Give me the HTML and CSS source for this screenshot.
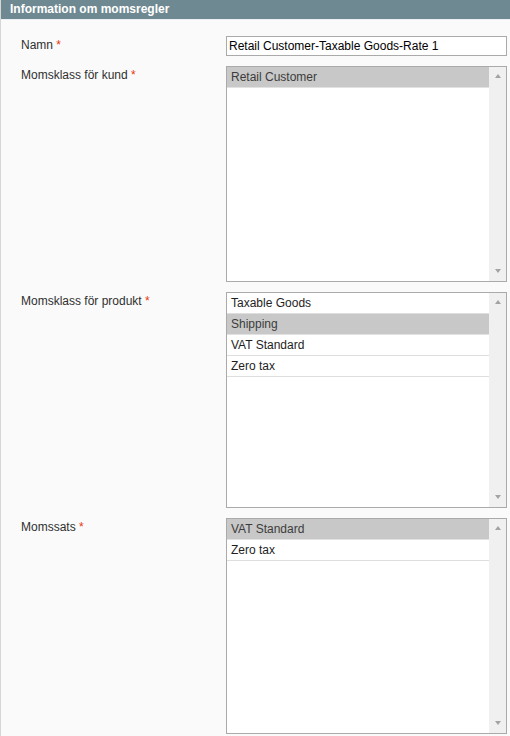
FILE: index.html
```html
<!DOCTYPE html>
<html lang="sv">
<head>
<meta charset="utf-8">
<title>Information om momsregler</title>
<link rel="stylesheet" href="styles.css">
</head>
<body>
<div class="panel">
  <div class="header">Information om momsregler</div>
  <div class="form">
    <div class="row">
      <div class="label">Namn <span class="req">*</span></div>
      <div class="field"><input class="text" type="text" value="Retail Customer-Taxable Goods-Rate 1"></div>
    </div>
    <div class="row">
      <div class="label">Momsklass för kund <span class="req">*</span></div>
      <div class="field">
        <div class="listbox">
          <div class="options">
            <div class="opt sel">Retail Customer</div>
          </div>
          <div class="scroll"><span class="up"></span><span class="down"></span></div>
        </div>
      </div>
    </div>
    <div class="row">
      <div class="label">Momsklass för produkt <span class="req">*</span></div>
      <div class="field">
        <div class="listbox">
          <div class="options">
            <div class="opt">Taxable Goods</div>
            <div class="opt sel">Shipping</div>
            <div class="opt">VAT Standard</div>
            <div class="opt">Zero tax</div>
          </div>
          <div class="scroll"><span class="up"></span><span class="down"></span></div>
        </div>
      </div>
    </div>
    <div class="row">
      <div class="label">Momssats <span class="req">*</span></div>
      <div class="field">
        <div class="listbox">
          <div class="options">
            <div class="opt sel">VAT Standard</div>
            <div class="opt">Zero tax</div>
          </div>
          <div class="scroll"><span class="up"></span><span class="down"></span></div>
        </div>
      </div>
    </div>
  </div>
</div>
</body>
</html>
```
FILE: styles.css
```css
html, body {
  margin: 0;
  padding: 0;
  background: #fafafa;
}
body {
  font-family: "Liberation Sans", Arial, sans-serif;
  font-size: 12px;
  color: #2f2f2f;
}
.panel {
  width: 510px;
  height: 736px;
  overflow: hidden;
  border-left: 1px solid #d6d6d6;
  box-sizing: border-box;
}
.header {
  height: 19px;
  line-height: 19px;
  background: #6f8992;
  color: #fff;
  font-weight: bold;
  padding-left: 9px;
  border-bottom: 1px solid #e9eef0;
}
.form {
  padding: 16px 0 0 20px;
  display: flex;
  flex-direction: column;
  gap: 10px;
}
.row {
  display: grid;
  grid-template-columns: 205px 281px;
}
.label {
  padding-top: 2px;
  line-height: 15px;
  color: #2f2f2f;
}
.req {
  color: #eb340a;
}
.text {
  display: block;
  box-sizing: border-box;
  width: 281px;
  height: 20px;
  margin: 0;
  border: 1px solid #aaaaaa;
  background: #fff;
  padding: 0 2px;
  font-family: "Liberation Sans", Arial, sans-serif;
  font-size: 12px;
  color: #000;
  outline: none;
}
.listbox {
  box-sizing: border-box;
  width: 281px;
  height: 216px;
  border: 1px solid #aaaaaa;
  background: #fff;
  display: flex;
}
.options {
  flex: 1;
  display: flex;
  flex-direction: column;
}
.opt {
  height: 20px;
  line-height: 20px;
  padding: 0 4px;
  border-bottom: 1px solid #dedede;
  color: #1e1e1e;
  white-space: nowrap;
}
.opt.sel {
  background: #c8c8c8;
  color: #3c3c3c;
  border-bottom-color: #e2e2e2;
}
.scroll {
  width: 17px;
  background: #f0f0f0;
  display: flex;
  flex-direction: column;
  justify-content: space-between;
  align-items: center;
  padding: 7px 0 8px;
  box-sizing: border-box;
}
.up, .down {
  width: 0;
  height: 0;
  border-left: 3.5px solid transparent;
  border-right: 3.5px solid transparent;
}
.up {
  border-bottom: 4px solid #a3a3a3;
}
.down {
  border-top: 4px solid #a3a3a3;
}
```
